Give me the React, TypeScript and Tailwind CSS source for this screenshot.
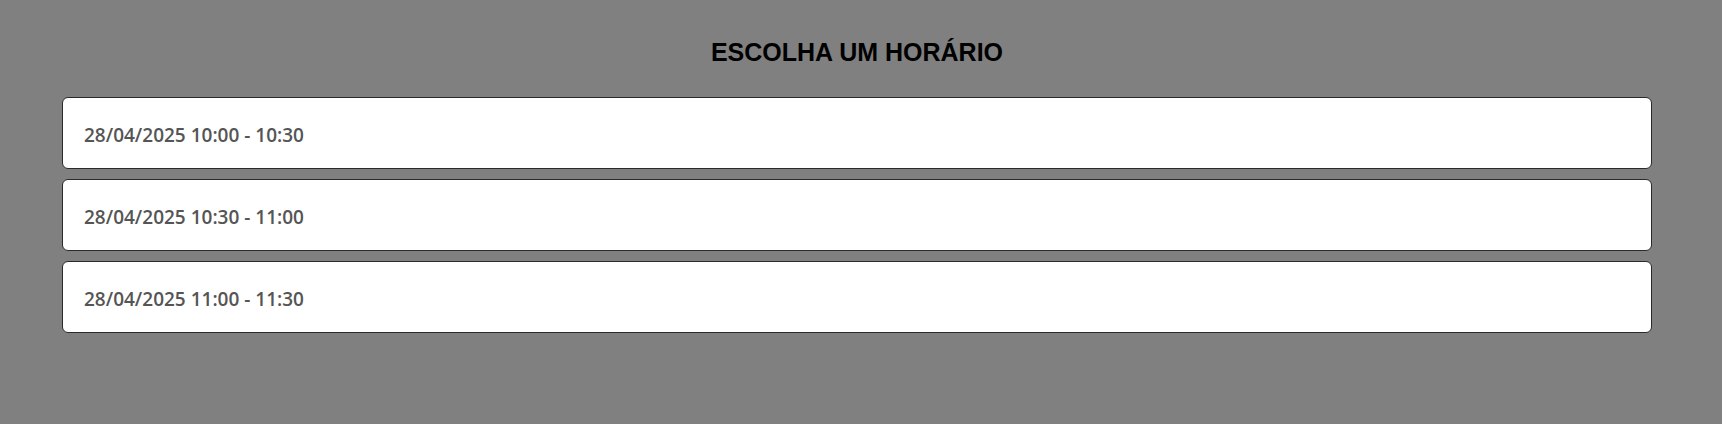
import React from "react";

const slots = [
  "28/04/2025 10:00 - 10:30",
  "28/04/2025 10:30 - 11:00",
  "28/04/2025 11:00 - 11:30",
];

export default function App() {
  return (
    <div className="w-[1722px] h-[424px] bg-[#808080] overflow-hidden">
      <div className="ml-[62px] w-[1590px] pt-[38px]">
        <h1 className="text-center text-[25px] leading-[28px] font-bold text-black [font-family:'Liberation_Sans',Arial,sans-serif]">
          ESCOLHA UM HORÁRIO
        </h1>
        <div className="mt-[31px] flex flex-col gap-[10px]">
          {slots.map((s) => (
            <div
              key={s}
              className="box-border h-[72px] bg-white border border-[#2a2a2a] rounded-[6px] pl-[21px] pt-[24px] text-[19px] leading-[27px] font-semibold text-[#555555] [font-family:'Open_Sans',sans-serif]"
            >
              {s}
            </div>
          ))}
        </div>
      </div>
    </div>
  );
}
